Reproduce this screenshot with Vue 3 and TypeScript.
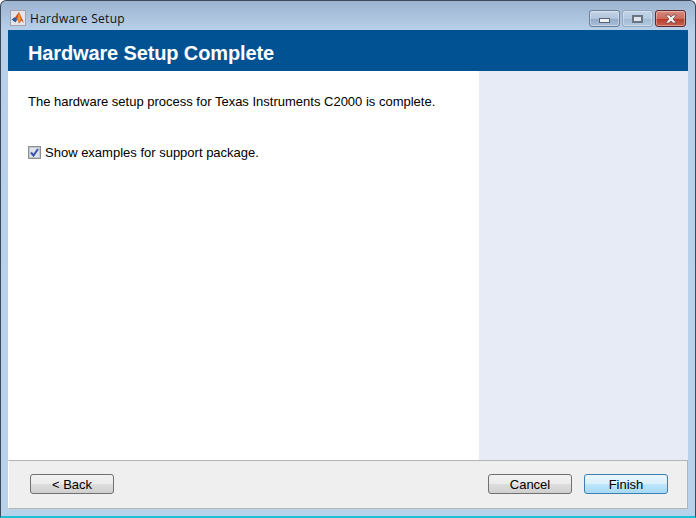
<template>
  <div class="window">
    <div class="titlebar">
      <svg class="app-icon" width="16" height="16" viewBox="0 0 16 16">
        <rect x="0.5" y="0.5" width="15" height="15" fill="#e4e4ea" stroke="#a3a3ae" />
        <path d="M1.5 9.5 L5 7 L7.5 9 L5.5 12.5 Z" fill="#2f5f9c" />
        <path d="M5 7.5 L9 2 L14 13 L11.5 10.5 L9 13.5 L7 8.8 Z" fill="#cf4a1c" />
        <path d="M9 2 L11 9 L9 13.5 L7.5 8.5 Z" fill="#f0952e" />
      </svg>
      <span class="window-title">{{ windowTitle }}</span>
      <div class="controls">
        <div class="ctl">
          <span class="glyph-min"></span>
        </div>
        <div class="ctl faded">
          <span class="glyph-max"></span>
        </div>
        <div class="ctl close">
          <svg width="16" height="10" viewBox="0 0 16 10">
            <path d="M2.5 1 H6 L8 3 L10 1 H13.5 L10 5 L13.5 9 H10 L8 7 L6 9 H2.5 L6 5 Z" fill="#f2f2f2" stroke="#6a3a3a" stroke-width="0.7" />
          </svg>
        </div>
      </div>
    </div>

    <div class="client">
      <div class="banner">{{ heading }}</div>
      <div class="body">
        <div class="main">
          <p class="message">{{ message }}</p>
          <label class="check-row">
            <span class="checkbox">
              <svg width="9" height="9" viewBox="0 0 9 9">
                <path d="M1 4.5 L3.5 7.5 L8 1" fill="none" stroke="#3a50b4" stroke-width="2" />
              </svg>
            </span>
            Show examples for support package.
          </label>
        </div>
        <div class="side"></div>
      </div>
      <div class="footer">
        <button class="btn">&lt; Back</button>
        <div class="right-btns">
          <button class="btn">Cancel</button>
          <button class="btn primary">Finish</button>
        </div>
      </div>
    </div>
  </div>
</template>

<script setup lang="ts">
const windowTitle = 'Hardware Setup'
const heading = 'Hardware Setup Complete'
const message = 'The hardware setup process for Texas Instruments C2000 is complete.'
</script>

<style>
html,
body {
  margin: 0;
  overflow: hidden;
}
</style>

<style scoped>
.window {
  box-sizing: border-box;
  width: 696px;
  height: 518px;
  display: flex;
  flex-direction: column;
  background: linear-gradient(to bottom, #9db4d0 0, #b8d0ea 30px, #b9d2ec 100%);
  border: 1px solid #3d4a58;
  border-bottom: 2px solid #1cc0d6;
  border-radius: 6px 6px 0 0;
  font-family: "Liberation Sans", Arial, sans-serif;
  color: #000;
}

.titlebar {
  height: 29px;
  display: flex;
  align-items: flex-start;
  padding: 9px 9px 0 9px;
  box-sizing: border-box;
  flex: none;
}

.app-icon {
  margin-right: 4px;
}

.window-title {
  font-family: "Open Sans", "Noto Sans", sans-serif;
  font-size: 12px;
  letter-spacing: 0.3px;
  line-height: 18px;
  color: #111;
}

.controls {
  margin-left: auto;
  display: flex;
  gap: 2px;
}

.ctl {
  box-sizing: border-box;
  width: 31px;
  height: 17px;
  border: 1px solid #6c7f96;
  border-radius: 3px;
  background: linear-gradient(to bottom, #c5d6ea 0, #b0c4dc 50%, #93aac6 52%, #a8c0da 100%);
  display: flex;
  align-items: center;
  justify-content: center;
  box-shadow: inset 0 0 0 1px rgba(255, 255, 255, 0.35);
}

.ctl.faded {
  border-color: #93a7be;
  background: linear-gradient(to bottom, #c2d4e8 0, #b5c9e0 50%, #a3bad4 52%, #b3c9e2 100%);
}

.ctl.close {
  border-color: #5a2a30;
  background: linear-gradient(to bottom, #d98a7e 0, #cb6a5c 50%, #b93a2c 52%, #c8604f 100%);
}

.glyph-min {
  box-sizing: border-box;
  width: 11px;
  height: 5px;
  margin-top: 4px;
  background: #eef2f6;
  border: 1px solid #59636f;
}

.glyph-max {
  box-sizing: border-box;
  width: 11px;
  height: 8px;
  border: 2px solid #6a7480;
  background: #dfe6ee;
}

.client {
  flex: 1;
  margin: 0 7px 7px;
  display: flex;
  flex-direction: column;
  min-height: 0;
}

.banner {
  height: 41px;
  flex: none;
  background: #005293;
  color: #fff;
  font-size: 20px;
  font-weight: bold;
  letter-spacing: -0.13px;
  line-height: 46px;
  padding-left: 20px;
}

.body {
  flex: 1;
  display: flex;
  min-height: 0;
}

.main {
  width: 471px;
  flex: none;
  background: #fff;
  box-sizing: border-box;
  padding: 23px 0 0 20px;
  font-size: 13px;
}

.message {
  margin: 0;
  line-height: 15px;
}

.check-row {
  display: flex;
  align-items: center;
  margin-top: 36px;
  line-height: 15px;
}

.checkbox {
  box-sizing: border-box;
  width: 13px;
  height: 13px;
  border: 1px solid #8e8f8f;
  background: #dfe3ea;
  box-shadow: inset 0 0 0 1px #c3c7ce;
  display: flex;
  align-items: center;
  justify-content: center;
  margin-right: 4px;
}

.side {
  flex: 1;
  background: #e7ebf5;
}

.footer {
  flex: none;
  box-sizing: border-box;
  height: 49px;
  background: #efefef;
  border-top: 1px solid #b4b4b4;
  border-bottom: 1px solid #b4b4b4;
  border-left: 1px solid #fff;
  border-right: 1px solid #b4b4b4;
  display: flex;
  align-items: flex-start;
  justify-content: space-between;
  padding: 13px 19px 0 21px;
}

.right-btns {
  display: flex;
  gap: 12px;
}

.btn {
  box-sizing: border-box;
  width: 84px;
  height: 20px;
  padding: 0;
  border: 1px solid #707070;
  border-radius: 3px;
  background: linear-gradient(to bottom, #f2f2f2 0, #ebebeb 50%, #dddddd 52%, #cfcfcf 100%);
  font-family: "Liberation Sans", Arial, sans-serif;
  font-size: 13px;
  color: #000;
}

.btn.primary {
  border-color: #3c7fb1;
  background: linear-gradient(to bottom, #eaf6fd 0, #d9f0fc 50%, #bee6fd 52%, #a7d9f5 100%);
}
</style>
